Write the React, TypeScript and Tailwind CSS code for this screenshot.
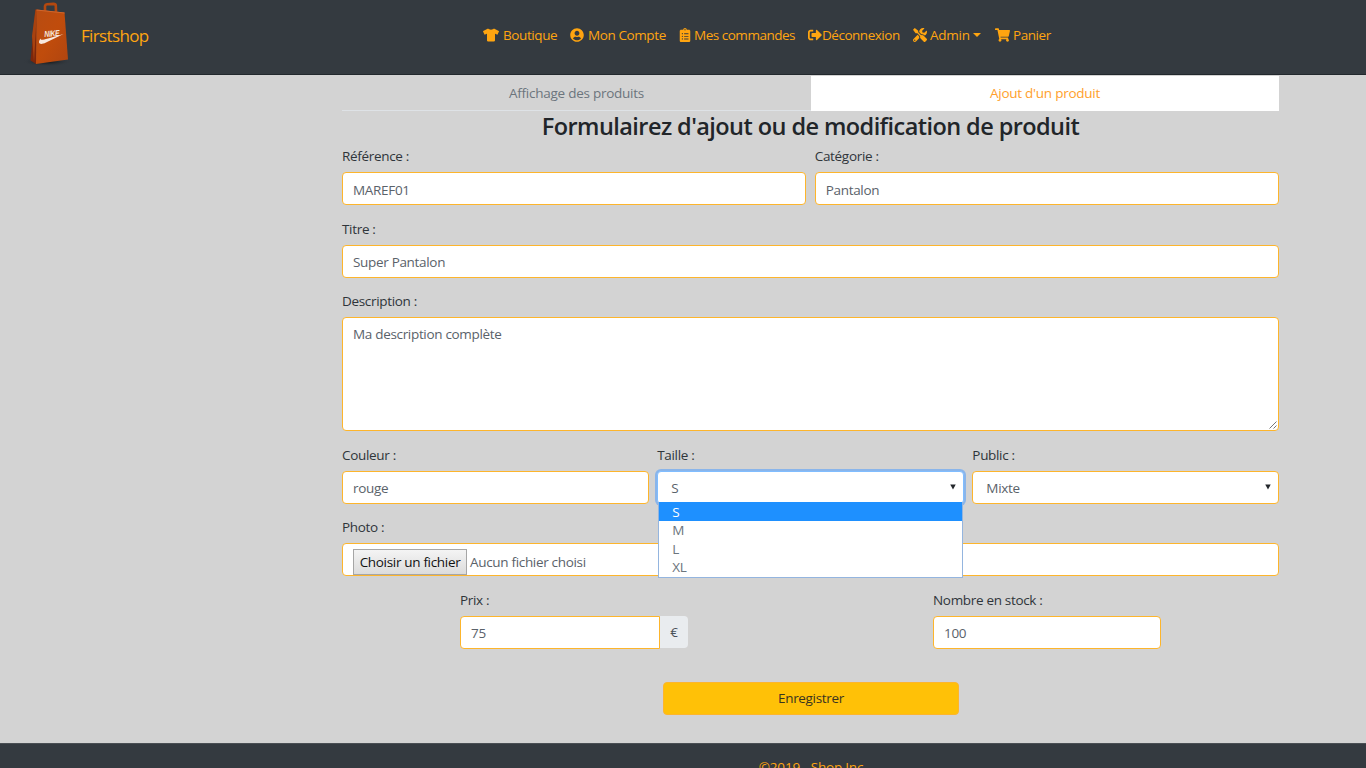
import type { ReactNode } from "react";
import {
  FaTshirt,
  FaUserCircle,
  FaClipboardList,
  FaSignOutAlt,
  FaTools,
  FaShoppingCart,
} from "react-icons/fa";

const control =
  "block h-[33px] w-full rounded-[4px] border border-[#fdb52c] bg-white px-[10px] pt-[2px] tracking-[-0.32px] text-[#5a626a] outline-none";

function Field({ label, children }: { label: string; children: ReactNode }) {
  return (
    <div className="relative">
      <div className="mb-[6px] h-5 leading-5">{label}</div>
      {children}
    </div>
  );
}

function Arrow() {
  return (
    <svg className="mb-[2px] h-[6px] w-[6px]" viewBox="0 0 7 7">
      <path d="M0.3 0.5h6.4L3.5 6.5z" fill="#23272b" />
    </svg>
  );
}

function Bag() {
  return (
    <svg className="h-[68px] w-[52px]" viewBox="0 0 52 68">
      <defs>
        <linearGradient id="front" x1="0" y1="0" x2="1" y2="1">
          <stop offset="0" stopColor="#b84c12" />
          <stop offset="0.5" stopColor="#c04c0c" />
          <stop offset="1" stopColor="#b04510" />
        </linearGradient>
        <radialGradient id="shade">
          <stop offset="0" stopColor="#0c1013" />
          <stop offset="1" stopColor="#343a40" stopOpacity="0" />
        </radialGradient>
      </defs>
      <ellipse cx="23" cy="61.500" rx="25" ry="5" fill="url(#shade)" />
      <path d="M21 12 21 6Q21.300 4.300 23 4.200L29.500 3.900Q31.600 3.900 31.800 5.500L32 12" fill="none" stroke="#b4480f" strokeWidth="2.600" />
      <path d="M11.500 9.500 6.500 60.500 12 64 13 10z" fill="#7c260b" />
      <path d="M11.500 9.500 8 36 10 62 13 10z" fill="#a8420f" />
      <path d="M12.500 9.500 40.500 12.500 44 59.500 12 64z" fill="url(#front)" />
      <path d="M12.500 9.500 40.500 12.500 40.600 13.600 12.500 10.600z" fill="#d0662c" />
      <path d="M16.500 38.500C13 43.500 16 45.500 22 42.500L39.500 34 24 38.400C18.500 40 16.600 40.500 16.500 38.500z" fill="#f8e9df" />
      <text x="20.500" y="37" fill="#f8e9df" fontFamily="Liberation Sans, sans-serif" fontSize="8.500" fontWeight="bold" fontStyle="italic" textLength="15" lengthAdjust="spacingAndGlyphs" transform="rotate(-4 20 36)">NIKE</text>
    </svg>
  );
}

function NavBar() {
  return (
    <header className="flex h-[75px] items-start border-b border-[#22282d] bg-[#343a40] text-[#ffa510]">
      <a className="flex w-[483px] pl-6">
        <Bag />
        <span className="ml-[5px] mt-[24px] text-[17px] leading-6 tracking-[-0.65px]">Firstshop</span>
      </a>
      <nav className="mt-[25px] flex leading-5">
        <a className="flex w-[87px] items-center gap-[4px]">
          <FaTshirt className="h-[14px] w-4" />
          <span className="tracking-[-0.4px]">Boutique</span>
        </a>
        <a className="flex w-[109px] items-center gap-[4px]">
          <FaUserCircle className="h-[14px] w-[14px]" />
          <span className="tracking-[-0.4px]">Mon Compte</span>
        </a>
        <a className="flex w-[129px] items-center gap-[3px]">
          <FaClipboardList className="h-[14px] w-[12px]" />
          <span className="tracking-[-0.48px]">Mes commandes</span>
        </a>
        <a className="flex w-[105px] items-center">
          <FaSignOutAlt className="h-[14px] w-[14px]" />
          <span className="tracking-[-0.48px]">Déconnexion</span>
        </a>
        <a className="flex w-[82px] items-center">
          <FaTools className="mr-[3px] h-[14px] w-[14px]" />
          <span className="tracking-[-0.25px]">Admin</span>
          <svg className="mb-[1px] ml-[3px] h-1 w-2" viewBox="0 0 8 4">
            <path d="M0 0h8L4 4z" fill="currentColor" />
          </svg>
        </a>
        <a className="flex w-[60px] items-center gap-[3px]">
          <FaShoppingCart className="h-[14px] w-[15px]" />
          <span className="tracking-[-0.45px]">Panier</span>
        </a>
      </nav>
    </header>
  );
}

function SizeMenu() {
  return (
    <ul className="absolute left-[1px] top-[57px] z-10 h-[76px] w-[305px] border border-t-0 border-[#94b5df] bg-white leading-[18.600px] text-[#6c757d]">
      <li className="h-[19.500px] bg-[#1e90ff] pl-[13px] pt-[1px] text-white">S</li>
      <li className="pl-[13px]">M</li>
      <li className="pl-[13px]">L</li>
      <li className="pl-[13px]">XL</li>
    </ul>
  );
}

export default function App() {
  return (
    <div className="h-[768px] w-[1366px] overflow-hidden bg-[#d3d3d3] font-['Open_Sans','Noto_Sans',sans-serif] text-[13.500px] tracking-[-0.32px] text-[#2f353a]">
      <NavBar />
      <main className="h-[668px] pl-[342px] pr-[87px]">
        <div className="flex h-[36px] pt-[1px] text-center leading-[35px] tracking-[-0.25px]">
          <a className="h-[35px] w-[469px] border-b border-[#dee2e6] text-[#6c757d]">Affichage des produits</a>
          <a className="h-[35px] w-[468px] bg-white text-[#ffa02b]">Ajout d'un produit</a>
        </div>
        <h1 className="h-[35px] text-center text-[23.500px] font-semibold leading-[31px] tracking-[-0.57px] text-[#212529]">
          Formulairez d'ajout ou de modification de produit
        </h1>
        <form className="flex flex-col gap-[13.600px]">
          <div className="grid grid-cols-2 gap-[8.500px]">
            <Field label="Référence :">
              <input className={control} defaultValue="MAREF01" />
            </Field>
            <Field label="Catégorie :">
              <input className={control} defaultValue="Pantalon" />
            </Field>
          </div>
          <Field label="Titre :">
            <input className={control} defaultValue="Super Pantalon" />
          </Field>
          <Field label="Description :">
            <textarea
              className="block h-[114px] w-full resize-none rounded-[4px] border border-[#fdb52c] bg-white px-[10px] py-[6px] leading-5 text-[#5a626a] outline-none"
              defaultValue="Ma description complète"
            />
            <svg className="absolute bottom-[2px] right-[2px] h-2 w-2" viewBox="0 0 8 8">
              <path d="M0.500 7.500 7.500 0.500M4.500 7.500 7.500 4.500" stroke="#777" strokeWidth="1" />
            </svg>
          </Field>
          <div className="grid grid-cols-3 gap-[8.500px]">
            <Field label="Couleur :">
              <input className={control} defaultValue="rouge" />
            </Field>
            <Field label="Taille :">
              <div className="flex h-[33px] items-center justify-between rounded-[4px] border border-[#80bdff] bg-white pl-[13px] pr-[7px] pt-[2px] text-[#5a626a] shadow-[0_0_0_2px_#8ab5ea]">
                S<Arrow />
              </div>
              <SizeMenu />
            </Field>
            <Field label="Public :">
              <div className="flex h-[33px] items-center justify-between rounded-[4px] border border-[#fdb52c] bg-white pl-[13px] pr-[7px] pt-[2px] text-[#5a626a]">
                Mixte<Arrow />
              </div>
            </Field>
          </div>
          <Field label="Photo :">
            <div className="flex h-[33px] items-start rounded-[4px] border border-[#fdb52c] bg-white pl-[10px] pt-[5px] text-[#5a626a]">
              <button
                type="button"
                className="h-[26px] w-[114px] whitespace-nowrap border border-[#a6a6a6] bg-linear-to-b from-[#f4f4f4] to-[#dcdcdc] tracking-[-0.32px] text-[#111]"
              >
                Choisir un fichier
              </button>
              <span className="ml-[3px] leading-[26px]">Aucun fichier choisi</span>
            </div>
          </Field>
          <div className="flex pl-[118px]">
            <div className="w-[473px]">
              <Field label="Prix :">
                <div className="flex w-[228px]">
                  <input
                    className="h-[33px] w-[200px] rounded-l-[4px] border border-[#fdb52c] bg-white px-[10px] pt-[2px] text-[#5a626a] outline-none"
                    defaultValue="75"
                  />
                  <span className="h-[32px] w-[28px] rounded-r-[4px] bg-[#e9ecef] text-center leading-[33px] text-[#495057]">€</span>
                </div>
              </Field>
            </div>
            <div className="w-[228px]">
              <Field label="Nombre en stock :">
                <input className={control} defaultValue="100" />
              </Field>
            </div>
          </div>
          <button
            type="button"
            className="ml-[321px] mt-[19px] h-[33px] w-[296px] rounded-[4px] border border-[#fdb52c] bg-[#ffc107] text-[#3a3420]"
          >
            Enregistrer
          </button>
        </form>
      </main>
      <footer className="h-[60px] border-t border-[#4a4f54] bg-[#343a40] pl-[256px] pt-[13px] text-center leading-5 tracking-[-0.2px] text-[#ffa510]">
        ©2019 - Shop Inc
      </footer>
    </div>
  );
}
